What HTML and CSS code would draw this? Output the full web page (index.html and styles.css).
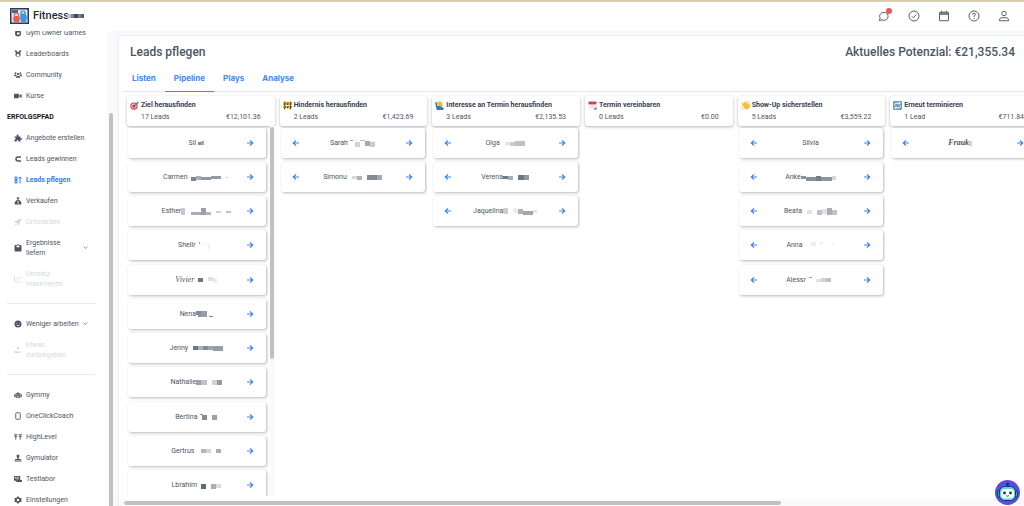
FILE: index.html
```html
<!DOCTYPE html>
<html lang="de">
<head>
<meta charset="utf-8">
<title>Leads pflegen</title>
<link rel="stylesheet" href="styles.css">
</head>
<body>
<header class="topbar">
  <a class="brand" href="#">
    <svg class="logo" viewBox="0 0 19 16" role="img" aria-label="Logo"><rect width="19" height="16" fill="#2b3b55"/><rect x="1.500" y="1.500" width="16" height="13" fill="#dfe6ee"/><path d="M2 2h6v3H2z" fill="#53627a"/><path d="M4.500 8V6.500q0-1.500 2-1.500t2 1.500V8" fill="none" stroke="#e2574c" stroke-width="1.200"/><path d="M4 8h5l1 2.500-1 3.500H4l-1-3.500z" fill="#ee5a4b"/><path d="M11 6V4.500Q11 3 13 3t2 1.500V6" fill="none" stroke="#3486c8" stroke-width="1.200"/><path d="M10.500 5.500h5L17 9l-1 5h-5l-1-5z" fill="#3c98dd"/></svg>
    <span>Fitness</span>
    <svg class="brand-mask" viewBox="0 0 17 6" aria-hidden="true"><path d="M0 1h4v4H0z" fill="#b9bdc4"/><path d="M4 1h3v4H4z" fill="#7d8490"/><path d="M7 1h4v4H7z" fill="#3d4656"/><path d="M11 1h3v4h-3z" fill="#7d8490"/><path d="M14 1h3v4h-3z" fill="#555e6c"/></svg>
  </a>
  <nav class="tools" aria-label="Werkzeuge">
    <button class="tool" aria-label="Nachrichten"><svg viewBox="0 0 24 24"><path d="M2.500 21.500l1.800-5A8.500 8 0 1 1 8 19.800z"/></svg><i class="dot"></i></button>
    <button class="tool" aria-label="Aufgaben"><svg viewBox="0 0 24 24"><circle cx="12" cy="12" r="10"/><path d="M7.500 12.500l3 3 6-6.500"/></svg></button>
    <button class="tool" aria-label="Kalender"><svg viewBox="0 0 24 24"><rect x="3" y="4.500" width="18" height="17" rx="1"/><path d="M3 6.500h18M3 8.500h18M7.500 1.500v4M16.500 1.500v4"/></svg></button>
    <button class="tool" aria-label="Hilfe"><svg viewBox="0 0 24 24"><circle cx="12" cy="12" r="10"/><path d="M9 9.500q0-3 3-3t3 2.700q0 1.600-3 3v1.600M12 16v2"/></svg></button>
    <button class="tool" aria-label="Profil"><svg viewBox="0 0 24 24"><circle cx="12" cy="7" r="4.500"/><path d="M3 21.500v-2q0-4 4-4h10q4 0 4 4v2z"/></svg></button>
  </nav>
</header>
<div class="shell">
  <aside class="sidebar">
    <nav class="menu">
      <a href="#"><svg viewBox="0 0 16 16"><path d="M3 2l3 2h4l3-2 1 7q0 6-6 6T2 9zM6 7v4h5V7z" fill-rule="evenodd"/></svg><span>Gym Owner Games</span></a>
      <a href="#"><svg viewBox="0 0 16 16"><path d="M1 1h4l2.500 4h1L11 1h4l-3 5.500A5 5 0 1 1 4 6.500zM8 7.500a3 3 0 1 0 0 6 3 3 0 0 0 0-6z" fill-rule="evenodd"/></svg><span>Leaderboards</span></a>
      <a href="#"><svg viewBox="0 0 18 16"><circle cx="3.500" cy="4" r="2"/><circle cx="14.500" cy="4" r="2"/><circle cx="9" cy="6" r="2.500"/><path d="M0 10q0-3 3-3h2l1 2-3 2H0zM18 10q0-3-3-3h-2l-1 2 3 2h3zM4 14q0-4 3-4h4q3 0 3 4z"/></svg><span>Community</span></a>
      <a href="#"><svg viewBox="0 0 18 16"><rect y="3" width="11" height="10" rx="1.500"/><path d="M12 7l5-4v10l-5-4z"/></svg><span>Kurse</span></a>
      <h2>ERFOLGSPFAD</h2>
      <a href="#"><svg viewBox="0 0 16 16"><path d="M1 5h4.500Q4 1 7 1t2 4h4v3.500q3-1.500 3 1t-3 1.500v4H9q0-3-2-3t-2 3H1v-4q2.500 0 2.500-2T1 7z"/></svg><span>Angebote erstellen</span></a>
      <a href="#"><svg viewBox="0 0 16 16"><path d="M14 4H8a4 4 0 0 0 0 8h6" fill="none" stroke="currentColor" stroke-width="3"/></svg><span>Leads gewinnen</span></a>
      <a href="#" class="active" aria-current="page"><svg viewBox="0 0 16 16"><path d="M2 2h4v5H2zM2 9h4v5H2zM12 15V2M9 5l3-3 3 3" fill="none" stroke="currentColor" stroke-width="2"/></svg><span>Leads pflegen</span></a>
      <a href="#"><svg viewBox="0 0 16 16"><path d="M5 1h6L9.500 4.500h-3zM6 5.500h4q5 4 5 8 0 1.500-2 1.500H3q-2 0-2-1.500 0-4 5-8zm1 2v1.200L6 10l3 1.500-2 .8v1.200h2l1-2-3-1.300h2V7.500z" fill-rule="evenodd"/></svg><span>Verkaufen</span></a>
      <a href="#" class="off"><svg viewBox="0 0 16 16"><path d="M15 1Q9 1 6 5H3L1 9h3l3 3v3l4-2v-3q4-3 4-9zM3 11l2 2-4 2z"/></svg><span>Onboarden</span></a>
      <a href="#" class="two"><svg viewBox="0 0 16 16"><path d="M3 2h2a4 4 0 0 1 6 0h2q2 0 2 2v9q0 2-2 2H3q-2 0-2-2V4q0-2 2-2zM8 2.500a3 3 0 0 0-3 4h6a3 3 0 0 0-3-4z" fill-rule="evenodd"/></svg><span>Ergebnisse<br>liefern</span><svg class="chev" viewBox="0 0 8 8"><path d="M1 2.500l3 3 3-3"/></svg></a>
      <a href="#" class="two off"><svg viewBox="0 0 16 16"><path d="M1 1v13h14M3 10l4-4 3 2 5-5" fill="none" stroke="currentColor" stroke-width="1.500"/></svg><span>Umsatz<br>maximieren</span></a>
      <hr>
      <a href="#"><svg viewBox="0 0 16 16"><path d="M8 1a7 7 0 1 0 0 14A7 7 0 0 0 8 1zM4 6h2v1H4zm6 0h2v1h-2zm-5 4h6q-1 2-3 2t-3-2z" fill-rule="evenodd"/></svg><span>Weniger arbeiten</span><svg class="chev" viewBox="0 0 8 8"><path d="M1 2.500l3 3 3-3"/></svg></a>
      <a href="#" class="two off"><svg viewBox="0 0 16 16"><path d="M8 1l3 3-3 4-3-4zM1 10h4l3 1.500h2l5-2-3 4.500H1z"/></svg><span>Etwas<br>zurückgeben</span></a>
      <hr>
      <a href="#"><svg viewBox="0 0 18 16"><path d="M8 1h2v3h3q2 0 2 2v6q0 2-2 2H5q-2 0-2-2V6q0-2 2-2h3zM0 7h2v5H0zm16 0h2v5h-2zM5.500 7v2h2V7zm5 0v2h2V7zM6 11v1h6v-1z" fill-rule="evenodd"/></svg><span>Gymmy</span></a>
      <a href="#"><svg viewBox="0 0 16 16"><rect x="3.500" y="1.500" width="9" height="13" rx="1.500" fill="none" stroke="currentColor" stroke-width="1.800"/></svg><span>OneClickCoach</span></a>
      <a href="#"><svg viewBox="0 0 18 16"><path d="M0 3h8M10 3h8M4 3v11M14 3v11M1 7h6M11 7h6" fill="none" stroke="currentColor" stroke-width="2"/></svg><span>HighLevel</span></a>
      <a href="#"><svg viewBox="0 0 16 16"><circle cx="8" cy="4" r="3"/><path d="M6.500 6h3v4H14v2H2v-2h4.500zM1 13h14v2H1z"/></svg><span>Gymulator</span></a>
      <a href="#"><svg viewBox="0 0 18 16"><path d="M0 1h14v9h4v5H5v-3H0zM2 3v4h2V3zm4 0v6h2V3zm4 0v6h1V3z" fill-rule="evenodd"/></svg><span>Testlabor</span></a>
      <a href="#"><svg viewBox="0 0 16 16"><path d="M6.500 1h3l.5 2 2 1 2-.6 1.500 2.600L14 7.500v1l1.500 1.500-1.500 2.600-2-.6-2 1-.5 2h-3L6 13l-2-1-2 .6L.5 10 2 8.500v-1L.5 6 2 3.400l2 .6 2-1zM8 5.500a2.500 2.500 0 1 0 0 5 2.500 2.500 0 0 0 0-5z" fill-rule="evenodd"/></svg><span>Einstellungen</span></a>
    </nav>
    <div class="rail"><div class="rail-thumb"></div></div>
  </aside>
  <main class="panel">
    <div class="heading"><h1>Leads pflegen</h1><p>Aktuelles Potenzial: €21,355.34</p></div>
    <nav class="tabs" aria-label="Ansichten"><a href="#">Listen</a><a href="#" class="current" aria-current="page">Pipeline</a><a href="#">Plays</a><a href="#">Analyse</a></nav>
    <div class="viewport"><div class="board" id="board"></div></div>
    <div class="hscroll"><div class="hscroll-thumb"></div></div>
  </main>
</div>
<button class="bot" aria-label="Assistent"><svg viewBox="0 0 25 25"><circle cx="12.500" cy="12.500" r="12.500" fill="#5b4be0"/><path d="M12.500 3v4" stroke="#173657" stroke-width="1.500"/><circle cx="12.500" cy="4" r="1.500" fill="#173657"/><rect x="2.500" y="10.500" width="20" height="7" rx="2.500" fill="#26bccb" stroke="#173657"/><rect x="4.500" y="6.500" width="16" height="14" rx="5" fill="#54d7dc" stroke="#173657"/><rect x="6" y="9" width="13" height="9.500" rx="4" fill="#fff"/><circle cx="9.500" cy="13" r="1.400" fill="#173657"/><circle cx="15.500" cy="13" r="1.400" fill="#173657"/><path d="M11 15.500q1.500 1.500 3 0" fill="none" stroke="#173657" stroke-width=".8"/></svg></button>
<script src="board.js"></script>
</body>
</html>
```

FILE: styles.css
```css
* { box-sizing: border-box; }
body { margin: 0; height: 100vh; display: flex; flex-direction: column; overflow: hidden; background: #f6f8fb; color: #4b5563; font: 7px/10px Roboto, "Liberation Sans", sans-serif; }
a { color: inherit; text-decoration: none; }
button { border: 0; padding: 0; background: none; color: inherit; font: inherit; }
svg { display: block; flex: none; }
h1, h2, h3, p, ul { margin: 0; padding: 0; }

.topbar { flex: none; height: 31px; border-top: 2px solid #d9cfae; background: #fff; display: flex; align-items: center; justify-content: space-between; padding: 0 12px 2px 10px; }
.brand { display: flex; align-items: center; color: #1f2937; font-size: 11px; font-weight: 500; line-height: 14px; }
.logo { width: 19px; height: 16px; margin-right: 4px; }
.brand-mask { width: 17px; height: 6px; margin-left: -2px; }
.tools { display: flex; gap: 14px; }
.tool { position: relative; width: 16px; height: 16px; display: grid; place-items: center; color: #56606f; }
.tool svg { width: 12px; height: 12px; fill: none; stroke: currentColor; stroke-width: 2; }
.dot { position: absolute; top: 0; right: 0; width: 6px; height: 6px; border-radius: 50%; background: #fb5050; }

.shell { flex: 1; min-height: 0; display: flex; }
.sidebar { flex: none; width: 114px; display: flex; overflow: hidden; background: #fff; }
.menu { flex: 1; margin-top: -9px; padding-left: 7px; }
.menu a { display: flex; align-items: center; height: 21px; padding-left: 7px; }
.menu a.two { height: 31px; }
.menu a > svg:first-child { width: 8px; height: 8px; margin-right: 4px; fill: currentColor; }
.menu h2 { color: #111827; font-size: 7px; font-weight: 700; line-height: 22px; height: 21px; }
.menu hr { margin: 9px 12px 9px 0; border: 0; border-top: 1px solid #e8eaee; }
.menu .active { color: #2f7cf6; font-weight: 700; }
.menu .off { color: #d5d9df; }
.menu a > .chev { width: 5px; height: 5px; margin-left: auto; margin-right: 19px; fill: none; stroke: currentColor; stroke-width: 1; }
.rail { width: 7px; padding: 82px 1px 0 2px; background: #fafafa; }
.rail-thumb { height: 100%; border-radius: 2px 2px 0 0; background: #c1c1c1; }

.panel { flex: 1; min-width: 0; display: flex; flex-direction: column; margin: 4px 0 0 4px; background: #fff; border: 1px solid #eceef2; border-width: 1px 0 0 1px; }
.heading { display: flex; justify-content: space-between; align-items: center; height: 32px; padding: 0 9px 0 11px; }
.heading h1, .heading p { font-size: 12px; line-height: 16px; font-weight: 500; }
.tabs { display: flex; height: 24px; margin-left: 4px; border-bottom: 1px solid #e3e6ea; color: #4287f5; font: 700 8px/20px Inter, "Open Sans", sans-serif; }
.tabs a { height: 24px; padding: 0 9px; }
.tabs .current { border-bottom: 1px solid #4287f5; }
.viewport { flex: 1; min-height: 0; overflow: hidden; padding: 4px 0 3px 8px; }
.board { display: grid; grid-template-columns: repeat(6, 1fr); gap: 5px; width: 911px; height: 100%; }
.column { min-width: 0; min-height: 0; display: flex; flex-direction: column; }
.column-head { flex: none; height: 30px; padding: 4px 14px 3px 3px; border-radius: 3px; background: #fff; box-shadow: 0 1px 3px #0000004d; }
.column-head h3 { display: flex; align-items: center; gap: 2px; font-size: 7px; line-height: 11px; font-weight: 700; white-space: nowrap; color: #374151; }
.column-head h3 svg { width: 9px; height: 9px; }
.column-head p { display: flex; justify-content: space-between; padding-left: 11px; line-height: 12px; }
.column-body { display: flex; flex: 1; min-height: 0; overflow: hidden; }
.cards { flex: 1; min-width: 0; list-style: none; padding: 2px 2px 0 1px; }
.card { display: grid; grid-template-columns: 10px 1fr 10px; align-items: center; height: 30px; margin-bottom: 4px; padding: 0 11px 0 10px; border-radius: 3px; background: #fff; box-shadow: 1px 1px 3px #00000047; }
.card:nth-child(4n) { margin-bottom: 5px; }
.card button { color: #3b82f6; }
.card button svg { width: 8px; height: 8px; margin: auto; fill: none; stroke: currentColor; stroke-width: 1.2; }
.name { grid-column: 2; display: flex; justify-content: center; align-items: center; white-space: nowrap; }
.name svg { height: 10px; }
.name.script { font-family: "Liberation Serif", serif; font-style: italic; font-size: 8px; }
.name.strong { font-family: "Liberation Serif", serif; font-style: italic; font-weight: 700; font-size: 8px; }
.scrolls .cards { padding-right: 4px; }
.vscroll { width: 5px; padding-top: 1px; background: #fafafa; }
.vscroll-thumb { width: 4px; height: 63%; border-radius: 2px; background: #c1c1c1; }
.hscroll { flex: none; height: 7px; padding: 2px 0 1px 5px; background: #fafafa; }
.hscroll-thumb { width: 73%; height: 4px; border-radius: 2px; background: #c1c1c1; }
.bot { position: fixed; right: 4px; bottom: 1px; width: 25px; height: 25px; }
```

FILE: board.js
```javascript
const icons = {
  target: '<circle cx="7" cy="9" r="6.500" fill="#d93c45"/><circle cx="7" cy="9" r="4.500" fill="#f5e3e3"/><circle cx="7" cy="9" r="3" fill="#c92c3c"/><path d="M7 9l6-6" stroke="#3f6d86" stroke-width="1.500"/><path d="M11 4l2-4 1 2 2 1-3 3z" fill="#35a6c4"/>',
  barrier: '<path d="M2 1h2v14H2zM12 1h2v14h-2z" fill="#5d5636"/><path d="M0 2h16v5H0zM0 9h16v4H0z" fill="#e9b73a"/><path d="M3 2h2L4 7H2zM8 2h2L9 7H7zM13 2h2l-1 5h-2zM3 9h2l-1 4H2zM8 9h2l-1 4H7zM13 9h2l-1 4h-2z" fill="#403b2c"/>',
  person: '<circle cx="8" cy="5" r="4.500" fill="#f3bd35"/><path d="M0 2h3l1 9H2z" fill="#3b74a8"/><path d="M2 9h9l4 4v3H3z" fill="#2b78c5"/><path d="M10 3h3v8h-3z" fill="#f0b330"/>',
  calendar: '<path d="M1 2h14v13H1z" fill="#eceff1"/><path d="M1 1h14v5H1z" fill="#c9444a"/><path d="M10 15l5-5v5z" fill="#5c6470"/><path d="M4 9h7" stroke="#c7ccd2"/>',
  wave: '<path d="M1 5l2-2 3 3-2-4 2-1 3 4-1-3 2-1 4 6 1-2q2 4 0 7-4 5-8 2z" fill="#f6bd36"/><path d="M1 10q0 4 4 5M12 1q3 0 3 3" fill="none" stroke="#d5982e"/>',
  repeat: '<rect width="16" height="16" rx="2" fill="#6f9bc0"/><path d="M3 8V6q0-2 2-2h7M10 2l3 2-3 2M13 8v2q0 2-2 2H4M6 10l-3 2 3 2" fill="none" stroke="#fff" stroke-width="1.700"/>'
};

// Each card: name, mask width, mask blocks as [x, y, width, height, shade], optional style.
const columns = [
  { icon: 'target', title: 'Ziel herausfinden', leads: '17 Leads', sum: '€12,101.36', scrolls: true, first: true, cards: [
    ['Sil', 8, [[2, 4, 3, 3, '#838a94'], [5, 3, 3, 4, '#a4a9b1']]],
    ['Carmen', 42, [[3, 5, 5, 4, '#7d8490'], [8, 4, 5, 4, '#a9aeb5'], [13, 5, 10, 3, '#9198a2'], [23, 4, 10, 3, '#959ba4'], [38, 5, 2, 1, '#c9cdd2']]],
    ['Esther', 50, [[0, 2, 4, 7, '#c6cad0'], [10, 6, 10, 3, '#a9aeb6'], [20, 2, 5, 7, '#9ba1aa'], [25, 6, 5, 3, '#b3b7bd'], [35, 5, 5, 2, '#cfd2d7'], [45, 5, 5, 2, '#c2c6cc']]],
    ['Shellr', 19, [[3, 2, 1, 2, '#9ba1aa'], [9, 3, 1, 1, '#ddd'], [12, 4, 2, 5, '#f1f1f3']]],
    ['Vivier', 23, [[4, 3, 5, 4, '#6f7784'], [14, 2, 5, 4, '#dfe1e5'], [19, 3, 4, 5, '#eceef0']], 'script'],
    ['Nena', 17, [[0, 2, 5, 4, '#858b95'], [2, 6, 4, 2, '#8f959e'], [5, 2, 6, 6, '#989ea7'], [13, 7, 4, 1, '#7d8490']]],
    ['Jenny', 35, [[5, 3, 5, 4, '#707784'], [10, 3, 5, 4, '#adb1b9'], [15, 3, 5, 4, '#858b95'], [20, 3, 5, 4, '#a0a5ae'], [25, 3, 10, 5, '#989ea7']]],
    ['Nathalie', 26, [[0, 3, 5, 5, '#9da2ab'], [5, 3, 6, 5, '#bec2c8'], [16, 3, 5, 5, '#cfd2d6'], [21, 3, 5, 5, '#959ba4']]],
    ['Bertina', 20, [[3, 2, 3, 1, '#8b919b'], [5, 3, 5, 5, '#858b95'], [15, 3, 5, 5, '#9ba1aa']]],
    ['Gertrus', 27, [[7, 3, 5, 4, '#b0b4bb'], [12, 3, 5, 4, '#d0d3d7'], [22, 3, 5, 4, '#a9aeb5']]],
    ['Lbrahim', 24, [[4, 4, 5, 5, '#626a78'], [14, 4, 5, 5, '#a9aeb6'], [19, 4, 5, 4, '#dadde1']]]
  ] },
  { icon: 'barrier', title: 'Hindernis herausfinden', leads: '2 Leads', sum: '€1,423.69', cards: [
    ['Sarah', 27, [[2, 2, 3, 1, '#9ba1aa'], [7, 4, 5, 5, '#cfd2d6'], [12, 2, 5, 1, '#b7bbc1'], [17, 3, 5, 5, '#a4a9b1'], [22, 4, 5, 5, '#c8cbd0']]],
    ['Simonu', 35, [[5, 4, 5, 3, '#d5d8dc'], [10, 4, 5, 4, '#aeb2b9'], [20, 3, 10, 5, '#858b95'], [30, 3, 5, 5, '#a4a9b1']]]
  ] },
  { icon: 'person', title: 'Interesse an Termin herausfinden', leads: '3 Leads', sum: '€2,135.53', cards: [
    ['Olga', 25, [[5, 4, 5, 3, '#e1e3e6'], [10, 4, 5, 4, '#c9ccd1'], [15, 3, 10, 5, '#bec2c8']]],
    ['Verena', 26, [[0, 4, 5, 3, '#707784'], [5, 4, 5, 4, '#a9aeb5'], [15, 3, 6, 5, '#707784'], [21, 3, 5, 5, '#9298a2']]],
    ['Jaquelina', 34, [[0, 2, 5, 6, '#cbced3'], [10, 2, 5, 5, '#eceef0'], [15, 3, 5, 5, '#aeb2b9'], [20, 5, 10, 4, '#a2a7af'], [30, 4, 4, 3, '#e2e4e7']]]
  ] },
  { icon: 'calendar', title: 'Termin vereinbaren', leads: '0 Leads', sum: '€0.00', cards: [] },
  { icon: 'wave', title: 'Show-Up sicherstellen', leads: '5 Leads', sum: '€3,559.22', cards: [
    ['Silvia', 0, []],
    ['Anke', 35, [[0, 4, 5, 3, '#8b919b'], [5, 5, 10, 4, '#8b919b'], [15, 4, 5, 5, '#777e8a'], [20, 5, 11, 4, '#8f959e'], [31, 4, 4, 4, '#d5d8dc']]],
    ['Beata', 35, [[5, 4, 5, 4, '#dfe1e4'], [15, 4, 5, 5, '#bec2c8'], [20, 3, 5, 5, '#dfe1e4'], [25, 2, 5, 7, '#a9aeb5'], [30, 4, 5, 5, '#bec2c8']]],
    ['Anna', 32, [[8, 2, 5, 4, '#eceef0'], [17, 2, 3, 2, '#eceef0'], [29, 3, 1, 2, '#eee']]],
    ['Alessr', 29, [[3, 2, 3, 1, '#9ba1aa'], [10, 4, 5, 3, '#dfe1e4'], [15, 3, 5, 4, '#d0d3d7'], [20, 3, 5, 4, '#bec2c8']]]
  ] },
  { icon: 'repeat', title: 'Erneut terminieren', leads: '1 Lead', sum: '€711.84', cards: [
    ['Frauk', 9, [[0, 3, 3, 5, '#d0d3d7']], 'strong']
  ] }
];

const left = '<button aria-label="Zurück"><svg viewBox="0 0 8 8"><path d="M7 4H1.500M4 1.300L1.300 4 4 6.700"/></svg></button>';
const right = '<button aria-label="Weiter"><svg viewBox="0 0 8 8"><path d="M1 4h5.500M4 1.300L6.700 4 4 6.700"/></svg></button>';

const card = (isFirst) => ([name, width, blocks, style = '']) => `<li class="card">${isFirst ? '' : left}<div class="name ${style}"><span>${name}</span>${width ? `<svg width="${width}" viewBox="0 0 ${width} 10" aria-hidden="true">${blocks.map(([x, y, w, h, c]) => `<rect x="${x}" y="${y}" width="${w}" height="${h}" fill="${c}"/>`).join('')}</svg>` : ''}</div>${right}</li>`;

document.getElementById('board').innerHTML = columns.map((c) => `<section class="column ${c.scrolls ? 'scrolls' : ''}">
  <div class="column-head"><h3><svg viewBox="0 0 16 16" aria-hidden="true">${icons[c.icon]}</svg>${c.title}</h3><p><span>${c.leads}</span><span>${c.sum}</span></p></div>
  <div class="column-body"><ul class="cards">${c.cards.map(card(c.first)).join('')}</ul>${c.scrolls ? '<div class="vscroll"><div class="vscroll-thumb"></div></div>' : ''}</div>
</section>`).join('');
```
